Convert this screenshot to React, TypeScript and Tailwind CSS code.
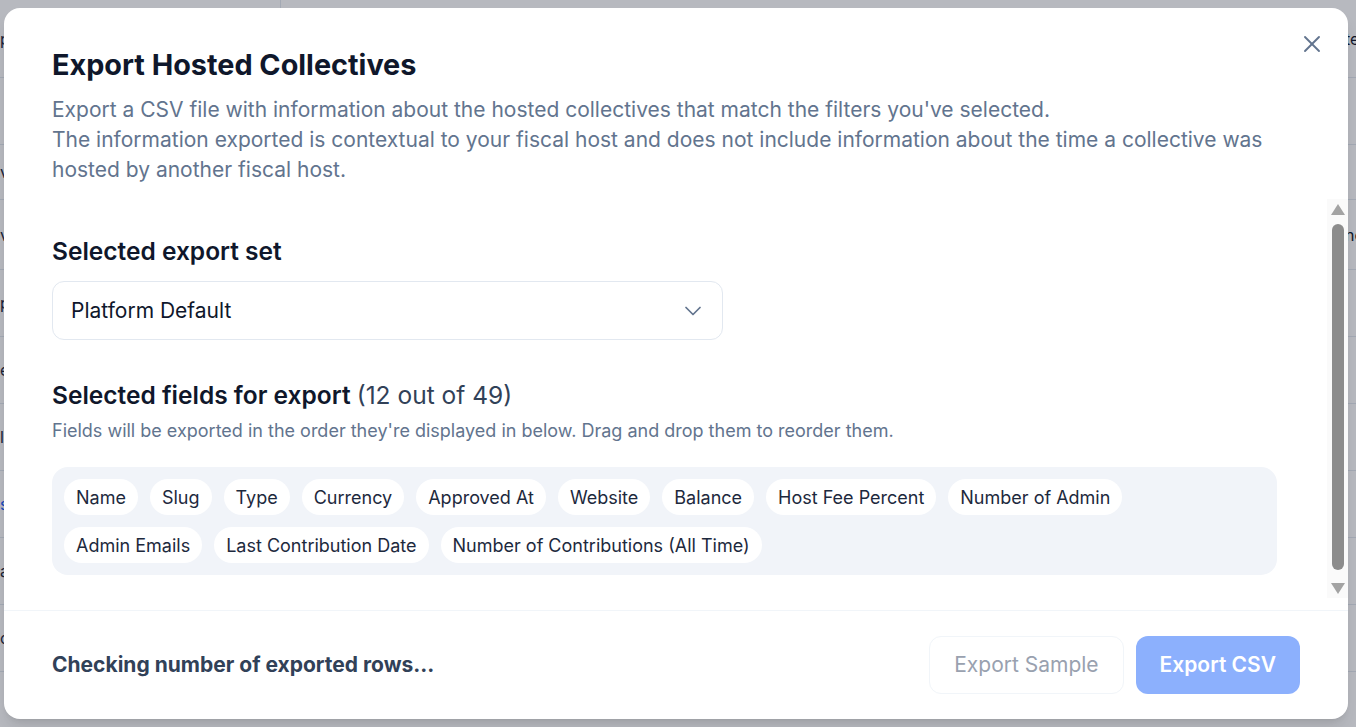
import { X, ChevronDown } from "lucide-react"

const rowOne = [
  "Name",
  "Slug",
  "Type",
  "Currency",
  "Approved At",
  "Website",
  "Balance",
  "Host Fee Percent",
  "Number of Admin",
]
const rowTwo = ["Admin Emails", "Last Contribution Date", "Number of Contributions (All Time)"]

const bgRows = [
  { h: "h-[78px]", side: "pending", right: "te" },
  { h: "h-[67px]", side: "", right: "" },
  { h: "h-[55px]", side: "vi", right: "" },
  { h: "h-[70px]", side: "v", right: "ne" },
  { h: "h-[67px]", side: "p", right: "" },
  { h: "h-[67px]", side: "e", right: "" },
  { h: "h-[67px]", side: "l", right: "" },
  { h: "h-[67px]", side: "s", right: "" },
  { h: "h-[67px]", side: "a", right: "" },
  { h: "h-[67px]", side: "c", right: "" },
]

function Chip({ label }: { label: string }) {
  return (
    <span className="h-9 px-3 flex items-center rounded-full bg-white text-[18px] text-slate-800 whitespace-nowrap">
      {label}
    </span>
  )
}

// the dialog body's scrollbar, drawn as it shows in the screenshot
function Scrollbar() {
  return (
    <div className="w-[21px] h-full bg-[#fafafa] flex flex-col items-center pt-[5px] pb-[4px]">
      <svg width="14" height="11" viewBox="0 0 14 11" className="shrink-0">
        <path d="M7 0 L14 11 L0 11 Z" fill="#a3a3a3" />
      </svg>
      <div className="mt-[9px] mb-[13px] w-3 flex-1 rounded-full bg-[#8c8c8c]" />
      <svg width="14" height="11" viewBox="0 0 14 11" className="shrink-0">
        <path d="M0 0 L14 0 L7 11 Z" fill="#a3a3a3" />
      </svg>
    </div>
  )
}

export default function App() {
  return (
    <div className="relative w-[1356px] h-[727px] overflow-hidden bg-white font-['Inter',sans-serif]">
      {/* page behind the dialog */}
      <div className="flex flex-col">
        {bgRows.map((r, i) => (
          <div key={i} className={`${r.h} grid grid-cols-[280px_1065px_200px] border-b border-slate-200`}>
            <div className={`flex items-center text-base ${r.side === "s" ? "text-blue-600" : "text-slate-800"}`}>
              {r.side}
            </div>
            <div className="border-l border-slate-200" />
            <div className="flex items-center text-base text-slate-900">{r.right}</div>
          </div>
        ))}
      </div>

      {/* overlay */}
      <div className="absolute inset-0 bg-slate-900/30" />

      {/* dialog */}
      <div className="absolute left-[4px] top-[8px] w-[1344px] h-[711px] bg-white rounded-2xl shadow-lg flex flex-col">
        <button className="absolute right-[18px] top-[18px] w-9 h-9 flex items-center justify-center text-slate-500">
          <X className="w-7 h-7" strokeWidth={1.6} />
        </button>

        <div className="px-12 pt-[39px] pb-[14px]">
          <h2 className="text-[28.8px] leading-9 font-bold text-slate-900">Export Hosted Collectives</h2>
          <p className="mt-[12px] text-[21px] leading-[30px] text-slate-500 whitespace-nowrap">
            Export a CSV file with information about the hosted collectives that match the filters you've selected.
            <br />
            The information exported is contextual to your fiscal host and does not include information about the time a collective was
            <br />
            hosted by another fiscal host.
          </p>
        </div>

        <div className="h-[399px] flex">
          <div className="flex-1 overflow-hidden pl-12 pr-[50px] pt-[36px]">
            <h3 className="text-[24.5px] leading-8 font-semibold text-slate-900">Selected export set</h3>
            <div className="mt-[14px] w-[671px] h-[59px] pl-[18px] pr-[15px] flex items-center justify-between rounded-xl border border-slate-200 bg-white">
              <span className="text-[21px] text-slate-900">Platform Default</span>
              <ChevronDown className="w-7 h-7 text-slate-500" strokeWidth={1.5} />
            </div>

            <h3 className="mt-[39px] text-[24.5px] leading-8 font-semibold text-slate-900">
              Selected fields for export <span className="font-normal text-slate-700">(12 out of 49)</span>
            </h3>
            <p className="mt-[7px] text-[18px] leading-[26px] text-slate-500">
              Fields will be exported in the order they're displayed in below. Drag and drop them to reorder them.
            </p>

            <div className="mt-[23px] p-3 rounded-2xl bg-[#f1f4f9] flex flex-col gap-3">
              <div className="flex gap-3">
                {rowOne.map((f) => (
                  <Chip key={f} label={f} />
                ))}
              </div>
              <div className="flex gap-3">
                {rowTwo.map((f) => (
                  <Chip key={f} label={f} />
                ))}
              </div>
            </div>
          </div>
          <Scrollbar />
        </div>

        <div className="mt-[12px] flex-1 border-t border-slate-100 px-12 flex items-center justify-between">
          <span className="text-[21px] font-bold text-slate-700">Checking number of exported rows...</span>
          <div className="flex gap-3">
            <button className="h-[58px] px-6 rounded-xl border border-slate-100 text-[21px] text-gray-400">
              Export Sample
            </button>
            <button className="h-[58px] px-6 rounded-xl bg-[#8cb0fd] text-[21px] font-semibold text-white">
              Export CSV
            </button>
          </div>
        </div>
      </div>
    </div>
  )
}
